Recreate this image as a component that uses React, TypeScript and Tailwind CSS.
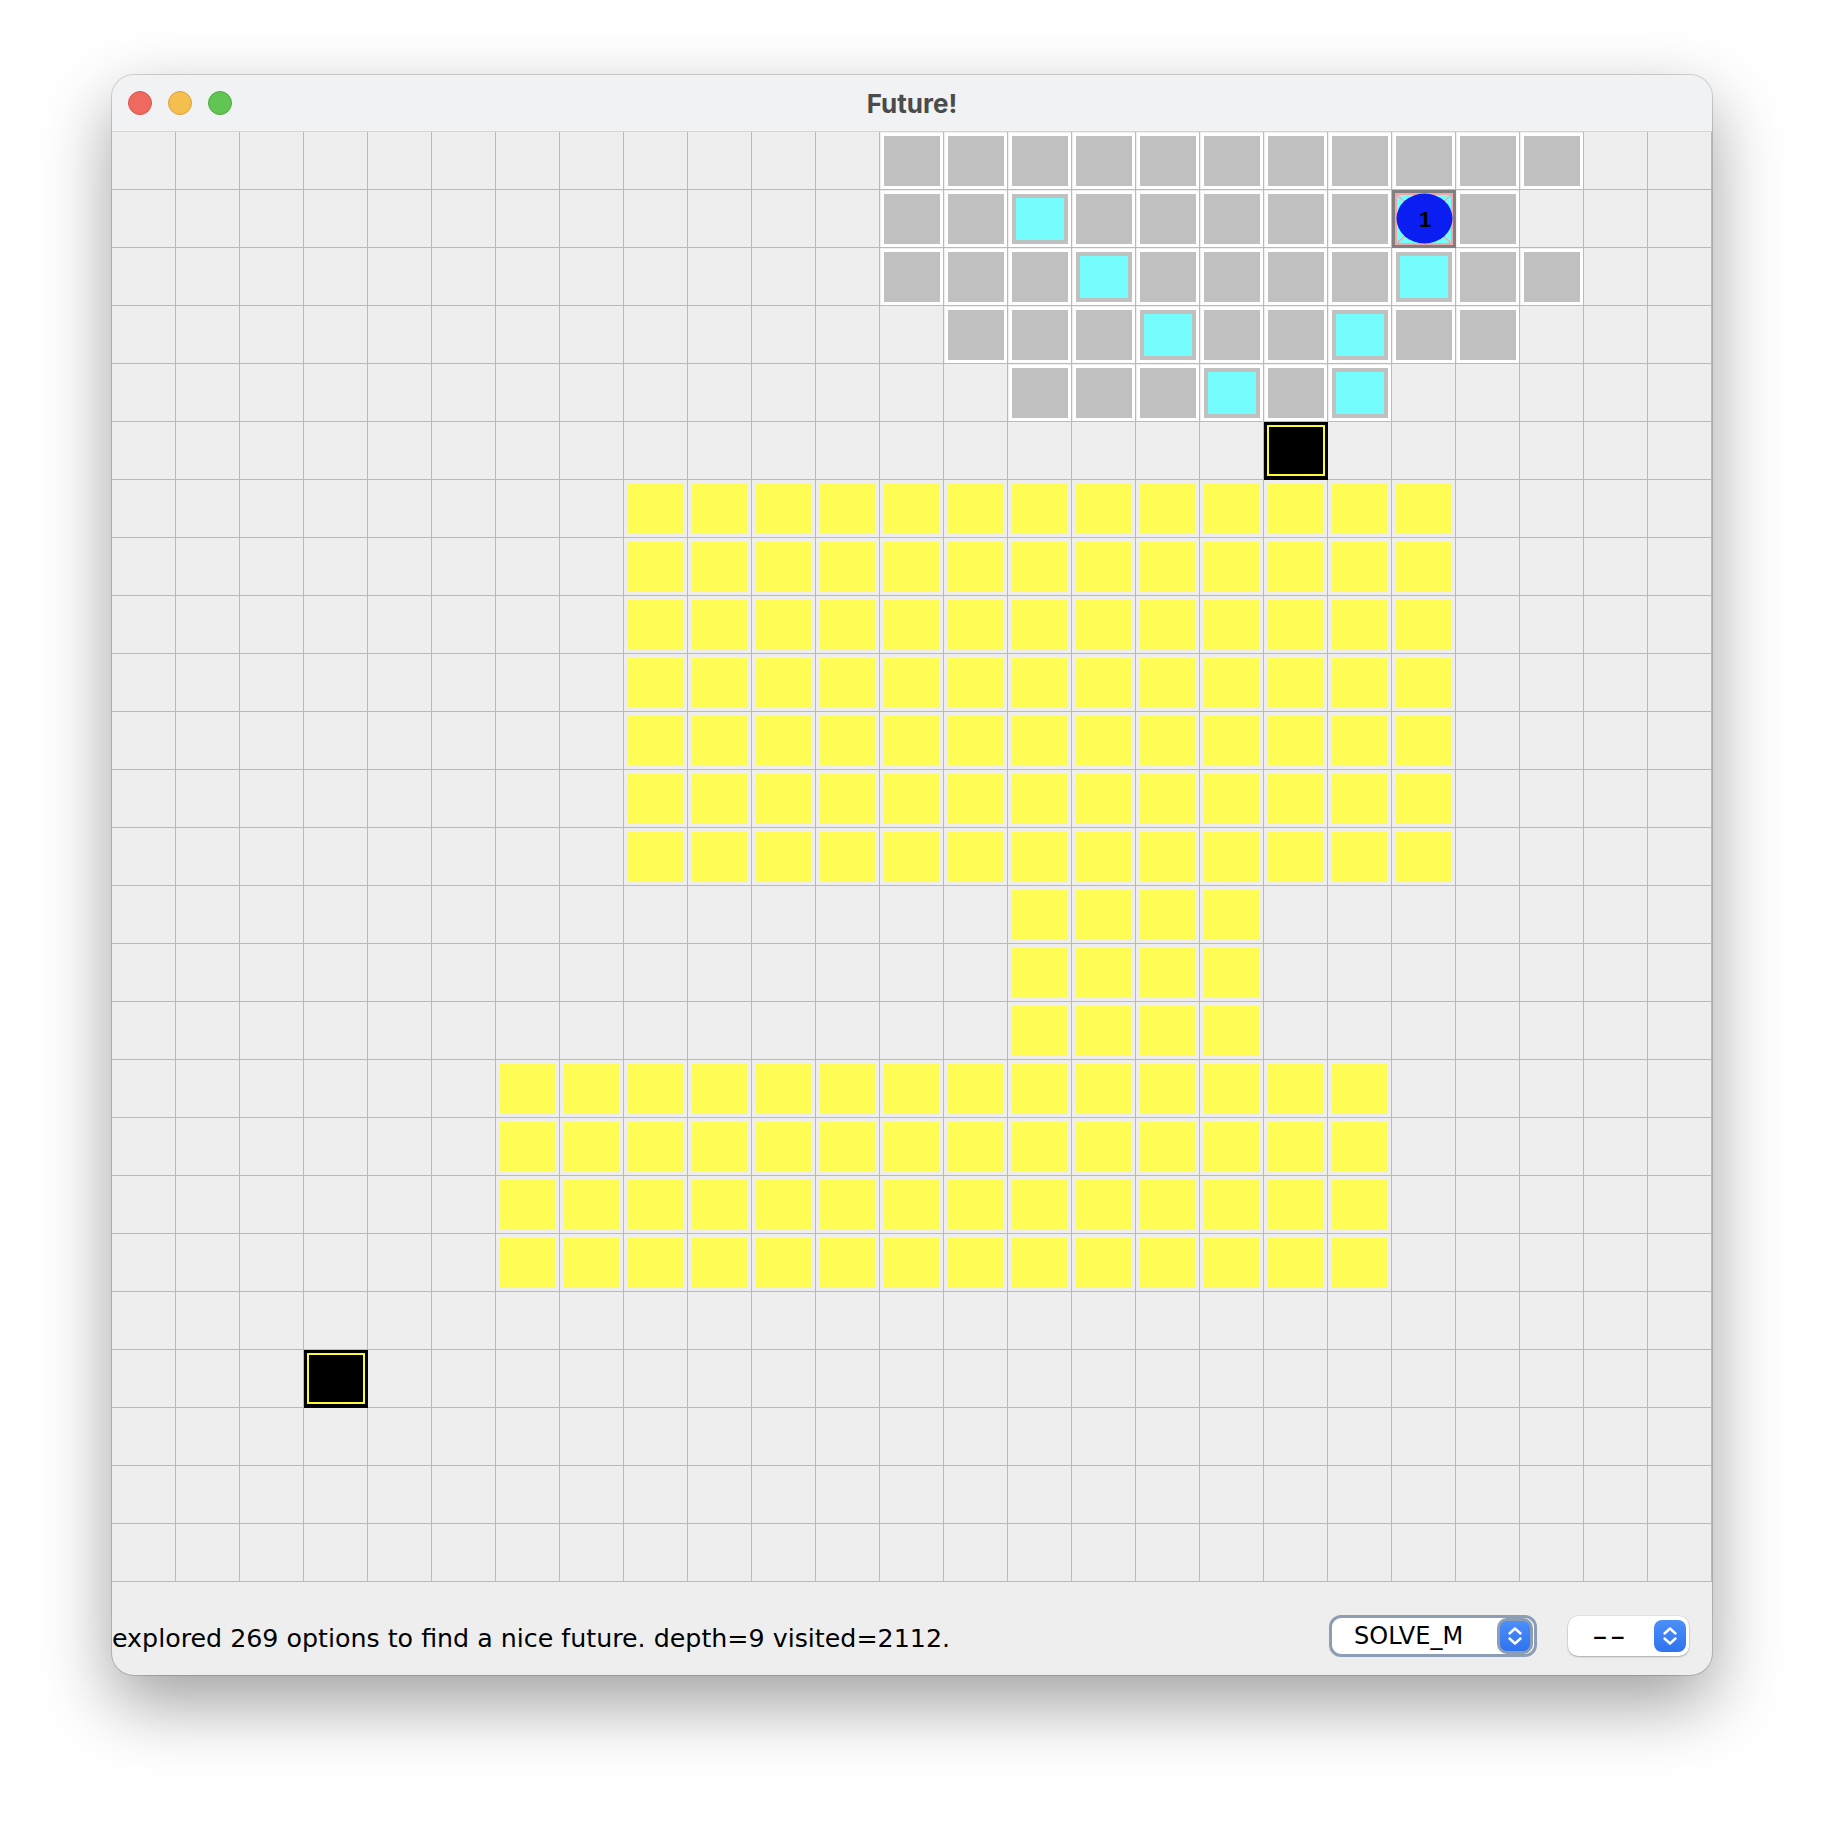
import React from 'react';

type CellType = 'e' | 'g' | 'c' | 'b' | 'k' | 'y';

function buildGrid(): CellType[][] {
  const g: CellType[][] = Array.from({ length: 25 }, () => Array<CellType>(25).fill('e'));
  const fill = (r0: number, r1: number, c0: number, c1: number, t: CellType) => {
    for (let r = r0; r <= r1; r++) for (let c = c0; c <= c1; c++) g[r][c] = t;
  };
  fill(0, 0, 12, 22, 'g');
  fill(1, 1, 12, 21, 'g');
  fill(2, 2, 12, 22, 'g');
  fill(3, 3, 13, 21, 'g');
  fill(4, 4, 14, 19, 'g');
  const cyan: [number, number][] = [[1, 14], [2, 15], [2, 20], [3, 16], [3, 19], [4, 17], [4, 19]];
  cyan.forEach(([r, c]) => (g[r][c] = 'c'));
  g[1][20] = 'b';
  g[5][18] = 'k';
  g[21][3] = 'k';
  fill(6, 12, 8, 20, 'y');
  fill(13, 15, 14, 17, 'y');
  fill(16, 19, 6, 19, 'y');
  return g;
}

const GRID = buildGrid();

function Cell({ t }: { t: CellType }) {
  return (
    <div className="relative w-16 h-[58px] border-r border-b border-[#bababa]">
      {(t === 'g' || t === 'c') && (
        <div className="absolute left-px top-px right-0 bottom-0 border-[3px] border-white bg-[#c0c0c0]" />
      )}
      {t === 'c' && <div className="absolute left-2 top-2 w-12 h-[42px] bg-[#75fcfd]" />}
      {t === 'y' && <div className="absolute left-1 top-1 w-14 h-[50px] bg-[#fefc55]" />}
      {t === 'k' && (
        <div className="absolute left-0 top-0 w-16 h-[58px] bg-black">
          <div className="absolute left-[3px] top-[3px] w-[58px] h-[51px] border-2 border-[#fbfb3c]" />
        </div>
      )}
      {t === 'b' && (
        <svg className="absolute left-0 top-0" width="64" height="58" viewBox="0 0 64 58">
          <rect x="0" y="0" width="64" height="58" fill="#808080" />
          <rect x="4" y="4" width="56" height="50" fill="#75fcfd" stroke="#f2a7a7" strokeWidth="2" />
          <line x1="5" y1="5" x2="59" y2="53" stroke="#f2a7a7" strokeWidth="1.5" />
          <line x1="59" y1="5" x2="5" y2="53" stroke="#f2a7a7" strokeWidth="1.5" />
          <ellipse cx="32.5" cy="28.5" rx="28" ry="25" fill="#0a1ef2" />
          <text
            x="33"
            y="37"
            textAnchor="middle"
            fontFamily="'Liberation Sans', Arial, sans-serif"
            fontWeight="bold"
            fontSize="22"
            fill="#000"
          >
            1
          </text>
        </svg>
      )}
    </div>
  );
}

function Chevrons() {
  return (
    <svg width="16" height="22" viewBox="0 0 16 22" fill="none">
      <path d="M2.5 8.5 L8 3.5 L13.5 8.5" stroke="white" strokeWidth="2.4" strokeLinecap="round" strokeLinejoin="round" />
      <path d="M2.5 13.5 L8 18.5 L13.5 13.5" stroke="white" strokeWidth="2.4" strokeLinecap="round" strokeLinejoin="round" />
    </svg>
  );
}

export default function App() {
  return (
    <div className="w-[1824px] h-[1824px] bg-white pl-[112px] pt-[75px]" style={{ fontFamily: "'DejaVu Sans', sans-serif" }}>
      <div className="w-[1600px] h-[1600px] rounded-[22px] overflow-hidden bg-[#eeeeee] shadow-[0_28px_70px_rgba(0,0,0,0.38),0_0_0_1px_rgba(0,0,0,0.16)] flex flex-col">
        {/* Title bar */}
        <div className="relative h-[57px] bg-[#f1f2f4] border-b border-[#d4d4d4] flex items-center pl-4 gap-4">
          <div className="w-6 h-6 rounded-full bg-[#ee6a5f] border border-[#d8574d]" />
          <div className="w-6 h-6 rounded-full bg-[#f5bf4f] border border-[#d9a23a]" />
          <div className="w-6 h-6 rounded-full bg-[#61c554] border border-[#4ea944]" />
          <div
            className="absolute inset-0 flex items-center justify-center text-[26px] font-bold text-[#4b4b4b] pointer-events-none"
            style={{ fontFamily: "Inter, 'Noto Sans', sans-serif" }}
          >
            Future!
          </div>
        </div>
        {/* Grid */}
        <div className="flex flex-col">
          {GRID.map((row, r) => (
            <div key={r} className="flex">
              {row.map((t, c) => (
                <Cell key={c} t={t} />
              ))}
            </div>
          ))}
        </div>
        {/* Status bar */}
        <div className="flex items-start h-[93px]">
          <div className="mt-[42px] text-[25.3px] leading-[30px] text-black whitespace-nowrap">
            explored 269 options to find a nice future. depth=9 visited=2112.
          </div>
          <div className="ml-auto mt-[33px] w-[208px] h-[42px] rounded-[12px] border-[3px] border-[#8c9db4] bg-white flex items-center">
            <span className="pl-[22px] text-[24px] text-black">SOLVE_M</span>
            <div className="ml-auto mr-px w-[36px] h-[36px] rounded-[10px] border-[3px] border-[#8c9db4] bg-gradient-to-b from-[#4b8ff9] to-[#2f73ee] flex items-center justify-center">
              <Chevrons />
            </div>
          </div>
          <div className="ml-[31px] mr-[23px] mt-[34px] w-[121px] h-[40px] rounded-[10px] bg-white shadow-[0_1px_2px_rgba(0,0,0,0.25),0_0_0_0.5px_rgba(0,0,0,0.08)] flex items-center">
            <span className="ml-[24px] inline-block origin-left scale-x-[1.7] text-[26px] tracking-[1px] text-black">--</span>
            <div className="ml-auto mr-[3px] w-8 h-8 rounded-[8px] bg-gradient-to-b from-[#4b8ff9] to-[#2f73ee] flex items-center justify-center">
              <Chevrons />
            </div>
          </div>
        </div>
      </div>
    </div>
  );
}
